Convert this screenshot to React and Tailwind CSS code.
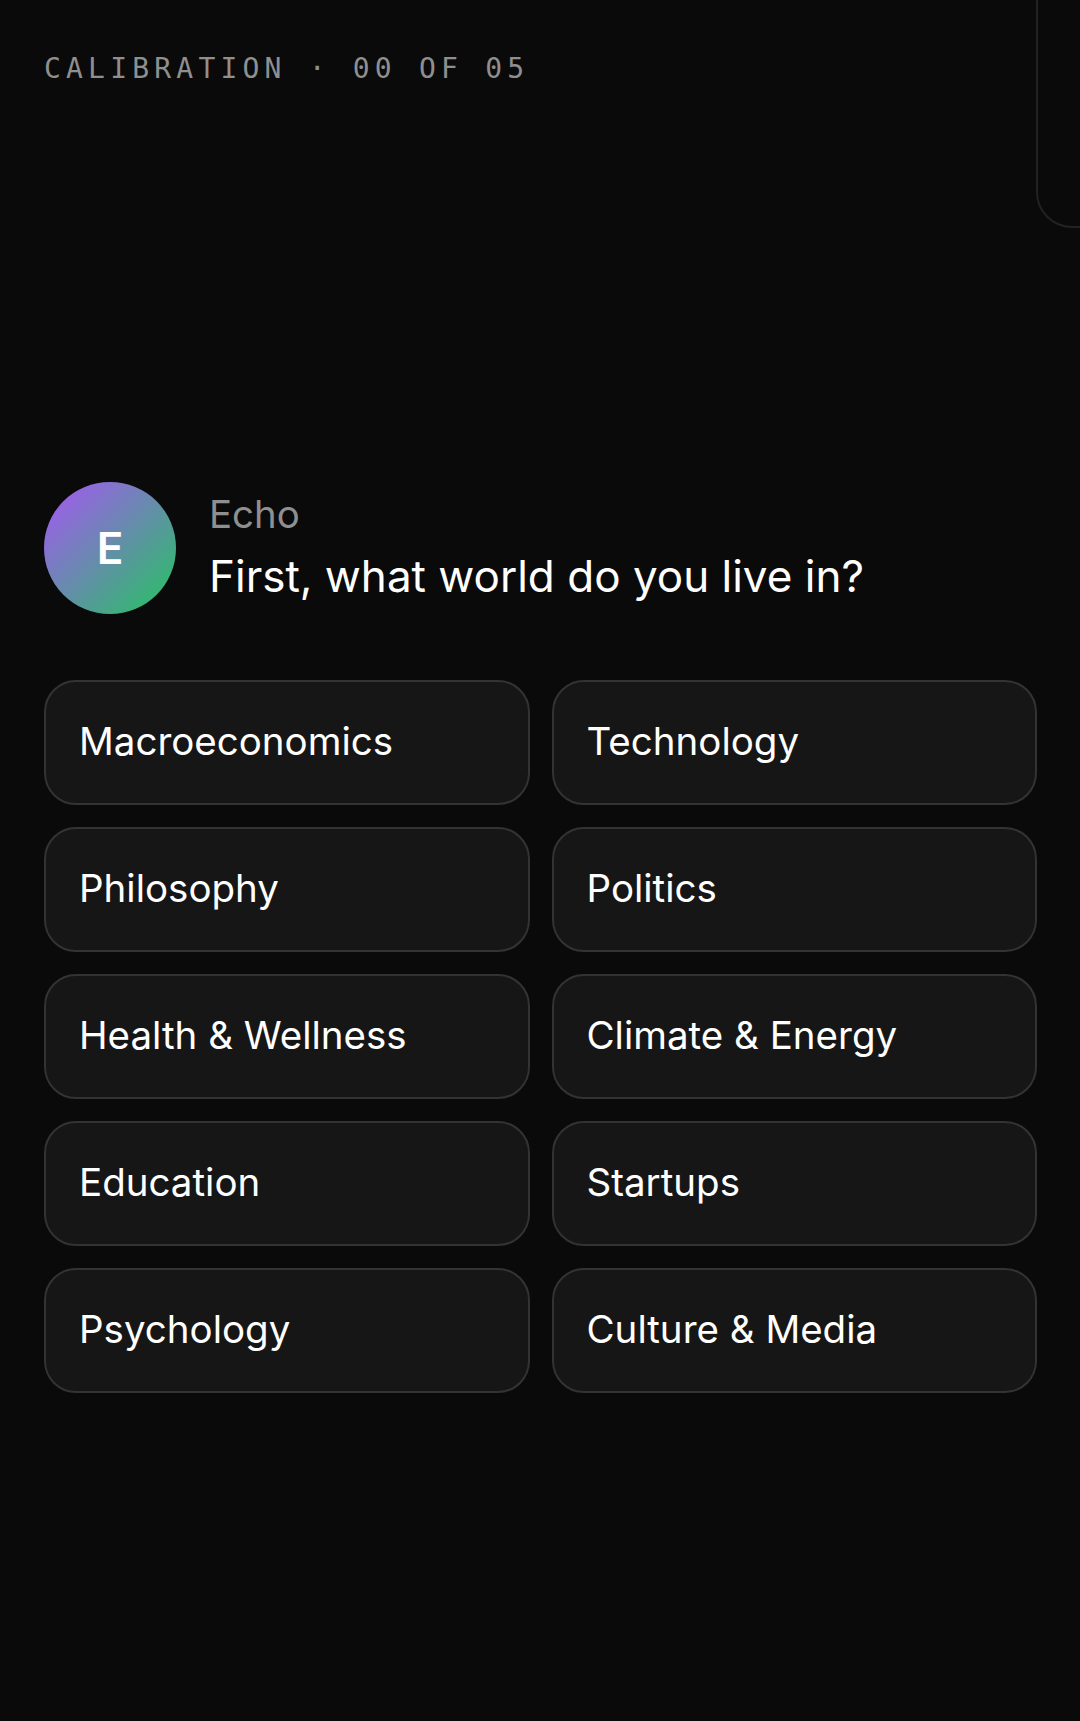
const topics = [
  "Macroeconomics",
  "Technology",
  "Philosophy",
  "Politics",
  "Health & Wellness",
  "Climate & Energy",
  "Education",
  "Startups",
  "Psychology",
  "Culture & Media",
];

const App = () => {
  return (
    <div className="relative h-[1721px] w-[1080px] overflow-hidden bg-[#0a0a0a] pl-[44px] pr-[43px] pt-[51px] font-['Inter',sans-serif] text-white">
      {/* panel peeking in from the top right */}
      <div className="absolute -top-[40px] left-[1036px] h-[268px] w-[200px] rounded-[36px] border-2 border-[#222222]" />

      <div className="font-['DejaVu_Sans_Mono',monospace] text-[28px] leading-[36px] tracking-[5.2px] text-[#8f8f8f]">
        CALIBRATION · 00 OF 05
      </div>

      <div className="mt-[395px] flex items-center gap-[33px]">
        <div className="flex h-[132px] w-[132px] shrink-0 items-center justify-center rounded-full bg-linear-to-br/srgb from-[#a855f7] to-[#22c55e] text-[44px] font-semibold">
          E
        </div>
        <div className="pb-[3px]">
          <div className="text-[38.4px] leading-[50px] text-[#8f8f8f]">Echo</div>
          <div className="mt-[9px] text-[44px] leading-[56px]">First, what world do you live in?</div>
        </div>
      </div>

      <div className="mt-[66px] grid grid-cols-2 gap-x-[22px] gap-y-[22px]">
        {topics.map((topic) => (
          <div
            key={topic}
            className="flex h-[125px] items-center rounded-[32px] border-2 border-[#333333] bg-[#161616] pb-[2px] pl-[33px] pr-[32px] text-[38.5px]"
          >
            {topic}
          </div>
        ))}
      </div>
    </div>
  );
};

export default App;
